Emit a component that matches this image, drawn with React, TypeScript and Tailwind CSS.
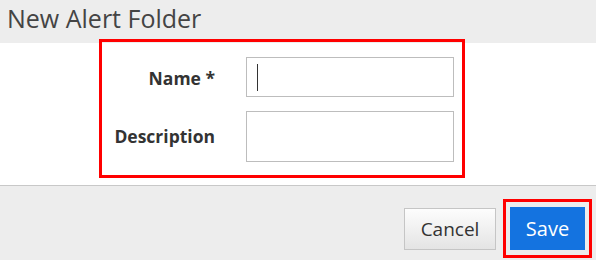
export default function App() {
  const font = { fontFamily: '"Open Sans", "Noto Sans", sans-serif' };
  return (
    <div className="w-[596px] h-[260px] flex flex-col bg-white overflow-hidden" style={font}>
      <div className="h-[43px] shrink-0 bg-[#ededed] pl-[7px] pt-[6px]">
        <div className="text-[25px] leading-none text-[#444]">New Alert Folder</div>
      </div>
      <div className="h-[142px] shrink-0 bg-white">
        <div className="relative ml-[99px] -mt-[4px] w-[366px] h-[139px] border-[3px] border-[#ff0000] pt-[15px] flex flex-col gap-[14px]">
          <div className="flex items-center h-[40px]">
            <div className="w-[113px] pt-[2px] text-right text-[17.5px] font-bold text-[#333]">Name *</div>
            <div className="ml-[31px] w-[208px] h-[40px] border border-[#bdbdbd] bg-white flex items-center pl-[10px]">
              <div className="w-px h-[27px] bg-[#333]" />
            </div>
          </div>
          <div className="flex items-center h-[51px]">
            <div className="w-[113px] text-right text-[17.5px] font-bold text-[#333]">Description</div>
            <div className="ml-[31px] w-[208px] h-[51px] border border-[#bdbdbd] bg-white" />
          </div>
        </div>
      </div>
      <div className="flex-1 bg-[#ededed] border-t border-[#c8c8c8] flex justify-end items-start pr-[4px]">
        <button className="mt-[22px] w-[92px] h-[42px] border border-[#c5c5c5] bg-gradient-to-b from-[#fdfdfd] to-[#e4e4e4] text-[19px] text-[#333] flex items-center justify-center">
          Cancel
        </button>
        <div className="mt-[13px] ml-[7px] w-[89px] h-[59px] border-[3px] border-[#ff0000] px-[4px] py-[5px]">
          <button className="w-[75px] h-[43px] bg-[#1473e0] text-white text-[20px] flex items-center justify-center">
            Save
          </button>
        </div>
      </div>
    </div>
  );
}
